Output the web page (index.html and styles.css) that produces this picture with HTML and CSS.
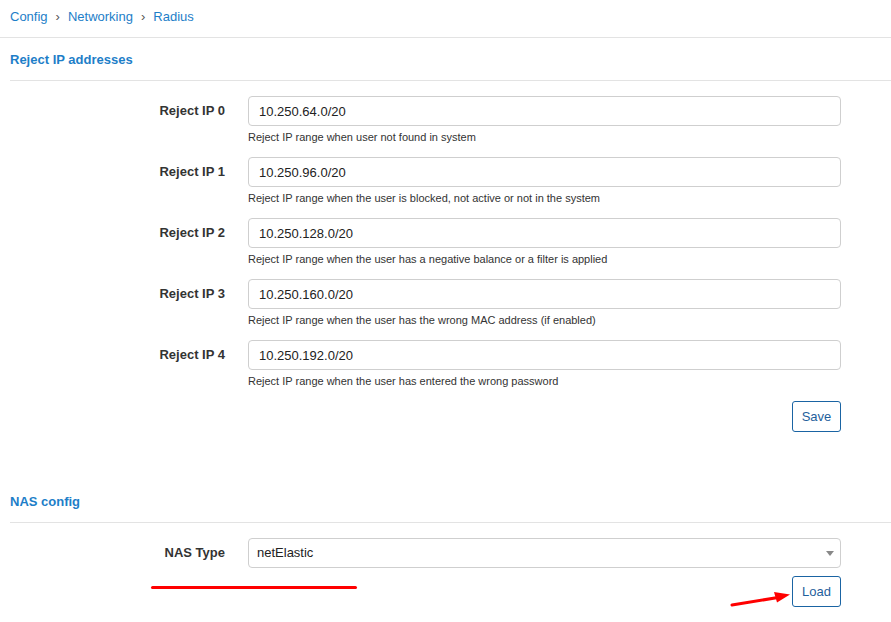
FILE: index.html
```html
<!DOCTYPE html>
<html>
<head>
<meta charset="utf-8">
<link rel="stylesheet" href="styles.css">
</head>
<body>
<div class="page">
  <nav class="breadcrumb">
    <a>Config</a><span class="sep">&#8250;</span><a>Networking</a><span class="sep">&#8250;</span><a>Radius</a>
  </nav>

  <section class="section">
    <h2 class="section-title">Reject IP addresses</h2>
    <div class="form">
      <div class="row">
        <label class="label">Reject IP 0</label>
        <div class="field">
          <input class="input" value="10.250.64.0/20">
          <div class="help">Reject IP range when user not found in system</div>
        </div>
      </div>
      <div class="row">
        <label class="label">Reject IP 1</label>
        <div class="field">
          <input class="input" value="10.250.96.0/20">
          <div class="help">Reject IP range when the user is blocked, not active or not in the system</div>
        </div>
      </div>
      <div class="row">
        <label class="label">Reject IP 2</label>
        <div class="field">
          <input class="input" value="10.250.128.0/20">
          <div class="help">Reject IP range when the user has a negative balance or a filter is applied</div>
        </div>
      </div>
      <div class="row">
        <label class="label">Reject IP 3</label>
        <div class="field">
          <input class="input" value="10.250.160.0/20">
          <div class="help">Reject IP range when the user has the wrong MAC address (if enabled)</div>
        </div>
      </div>
      <div class="row">
        <label class="label">Reject IP 4</label>
        <div class="field">
          <input class="input" value="10.250.192.0/20">
          <div class="help">Reject IP range when the user has entered the wrong password</div>
        </div>
      </div>
      <div class="actions">
        <button class="btn">Save</button>
      </div>
    </div>
  </section>

  <section class="section nas">
    <h2 class="section-title">NAS config</h2>
    <div class="form">
      <div class="row row-nas">
        <label class="label">NAS Type</label>
        <div class="field">
          <div class="select-wrap">
            <div class="select">netElastic</div>
          </div>
        </div>
      </div>
      <div class="actions actions-load">
        <button class="btn">Load</button>
      </div>
    </div>
  </section>

  <div class="mark-line"></div>
  <svg class="mark-arrow" width="70" height="20" viewBox="0 0 70 20">
    <line x1="2" y1="16" x2="48" y2="8.5" stroke="#ff0000" stroke-width="3" stroke-linecap="round"/>
    <polygon points="44,3 60,5.5 47,13.5" fill="#ff0000"/>
  </svg>
</div>
</body>
</html>
```

FILE: styles.css
```css
* { box-sizing: border-box; }
html, body { margin: 0; padding: 0; background: #fff; }
body {
  font-family: "Liberation Sans", Arial, sans-serif;
  color: #333;
  width: 891px;
  height: 622px;
  overflow: hidden;
}
.page { position: relative; }

.breadcrumb {
  height: 38px;
  padding: 8px 10px 0;
  font-size: 13px;
  line-height: 17px;
  color: #1d7ec8;
  border-bottom: 1px solid #e3e3e3;
}
.breadcrumb .sep {
  display: inline-block;
  margin: 0 8px 0 8px;
  color: #555;
  font-size: 13px;
}

.section { margin-left: 10px; }
.section-title {
  margin: 0;
  height: 43px;
  padding-top: 13px;
  font-size: 13px;
  line-height: 17px;
  font-weight: bold;
  color: #1d7ec8;
  border-bottom: 1px solid #e3e3e3;
}

.form { padding-top: 15px; }
.row {
  display: grid;
  grid-template-columns: 215px 593px;
  column-gap: 23px;
  height: 61px;
}
.label {
  text-align: right;
  font-weight: bold;
  font-size: 13px;
  line-height: 17px;
  padding-top: 6px;
  color: #333;
}
.input, .select {
  display: block;
  width: 593px;
  height: 30px;
  border: 1px solid #cfcfcf;
  border-radius: 4px;
  padding: 0 10px;
  font-family: "Liberation Sans", Arial, sans-serif;
  font-size: 13px;
  color: #222;
  background: #fff;
  outline: none;
}
.select { line-height: 28px; padding-left: 8px; }
.help {
  margin-top: 4px;
  font-size: 11px;
  line-height: 14px;
  color: #333;
}

.actions {
  width: 831px;
  display: flex;
  justify-content: flex-end;
}
.btn {
  width: 49px;
  height: 31px;
  border: 1px solid #1a64a3;
  border-radius: 3px;
  background: #fff;
  color: #1f5f9c;
  font-family: "Liberation Sans", Arial, sans-serif;
  font-size: 13px;
  padding: 0;
}

.nas { margin-top: 48px; }
.nas .form { padding-top: 15px; }
.row-nas { height: 38px; }
.select-wrap { position: relative; }
.select-wrap::after {
  content: "";
  position: absolute;
  right: 7px;
  top: 13px;
  border-left: 4px solid transparent;
  border-right: 4px solid transparent;
  border-top: 5px solid #888;
}

.mark-line {
  position: absolute;
  left: 151px;
  top: 586px;
  width: 206px;
  height: 3px;
  background: #ff0000;
  border-radius: 2px;
}
.mark-arrow {
  position: absolute;
  left: 730px;
  top: 589px;
}
```
